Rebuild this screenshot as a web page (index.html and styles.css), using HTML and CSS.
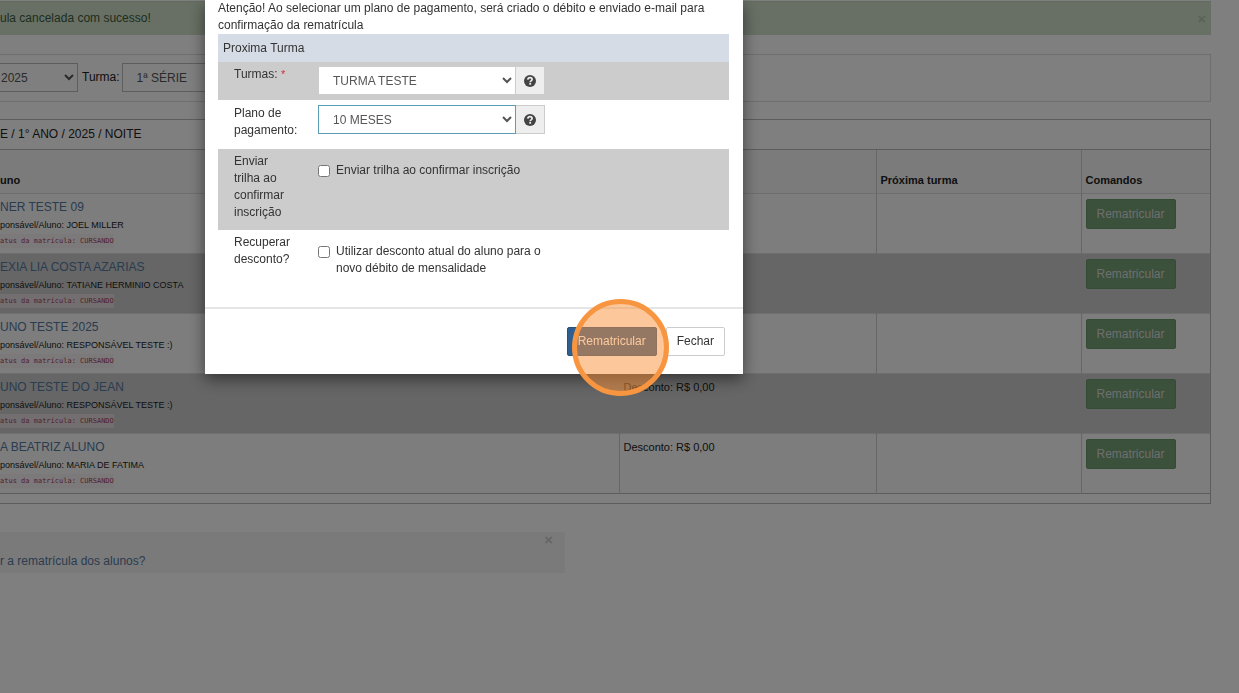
FILE: index.html
```html
<!DOCTYPE html>
<html lang="pt-BR">
<head>
    <meta charset="UTF-8">
    <meta name="viewport" content="width=device-width, initial-scale=1.0">
    <title>Rematrícula</title>
    <link rel="stylesheet" href="styles.css">
</head>
<body>
    <main class="page">
        <div class="alert">
            <span>ula cancelada com sucesso!</span>
            <button class="close" type="button">×</button>
        </div>

        <form class="filter">
            <select class="control year" aria-label="2025"><option>2025</option></select>
            <label for="turma">Turma:</label>
            <select class="control serie" id="turma"><option>1ª SÉRIE</option></select>
        </form>

        <section class="panel">
            <h2>E / 1° ANO / 2025 / NOITE</h2>
            <table class="students">
                <colgroup>
                    <col>
                    <col class="col-discount">
                    <col class="col-next">
                    <col class="col-commands">
                </colgroup>
                <thead>
                    <tr><th>uno</th><th></th><th>Próxima turma</th><th>Comandos</th></tr>
                </thead>
                <tbody>
                    <tr>
                        <td><a href="#">NER TESTE 09</a><small>ponsável/Aluno: JOEL MILLER</small><code>atus da matrícula: CURSANDO</code></td>
                        <td></td>
                        <td></td>
                        <td><button class="btn btn-success" type="button">Rematricular</button></td>
                    </tr>
                    <tr>
                        <td><a href="#">EXIA LIA COSTA AZARIAS</a><small>ponsável/Aluno: TATIANE HERMINIO COSTA</small><code>atus da matrícula: CURSANDO</code></td>
                        <td></td>
                        <td></td>
                        <td><button class="btn btn-success" type="button">Rematricular</button></td>
                    </tr>
                    <tr>
                        <td><a href="#">UNO TESTE 2025</a><small>ponsável/Aluno: RESPONSÁVEL TESTE :)</small><code>atus da matrícula: CURSANDO</code></td>
                        <td></td>
                        <td></td>
                        <td><button class="btn btn-success" type="button">Rematricular</button></td>
                    </tr>
                    <tr>
                        <td><a href="#">UNO TESTE DO JEAN</a><small>ponsável/Aluno: RESPONSÁVEL TESTE :)</small><code>atus da matrícula: CURSANDO</code></td>
                        <td>Desconto: R$ 0,00</td>
                        <td></td>
                        <td><button class="btn btn-success" type="button">Rematricular</button></td>
                    </tr>
                    <tr>
                        <td><a href="#">A BEATRIZ ALUNO</a><small>ponsável/Aluno: MARIA DE FATIMA</small><code>atus da matrícula: CURSANDO</code></td>
                        <td>Desconto: R$ 0,00</td>
                        <td></td>
                        <td><button class="btn btn-success" type="button">Rematricular</button></td>
                    </tr>
                </tbody>
            </table>
        </section>

        <aside class="help">
            <button class="close" type="button">×</button>
            <a href="#">r a rematrícula dos alunos?</a>
        </aside>
    </main>

    <div class="backdrop">
        <form class="modal" role="dialog" aria-modal="true">
            <div class="modal-body">
                <p class="notice">Atenção! Ao selecionar um plano de pagamento, será criado o débito e enviado e-mail para confirmação da rematrícula</p>
                <h3>Proxima Turma</h3>
                <div class="row gray">
                    <label class="name" for="turmas">Turmas: <span class="required">*</span></label>
                    <div class="group">
                        <select class="control" id="turmas"><option>TURMA TESTE</option></select>
                        <button class="addon" type="button" aria-label="Turmas">
                            <svg viewBox="0 0 12 12" width="12" height="12"><circle cx="6" cy="6" r="6" fill="#444"/><path d="M3.8 4.7C4 3.2 5 2.7 6 2.7s2.1.6 2.1 1.8c0 1.4-1.9 1.3-1.9 2.7" fill="none" stroke="#eee" stroke-width="1.7"/><rect x="5.3" y="8" width="1.8" height="1.7" fill="#eee"/></svg>
                        </button>
                    </div>
                </div>
                <div class="row plan">
                    <label class="name" for="plano">Plano de pagamento:</label>
                    <div class="group">
                        <select class="control active" id="plano"><option>10 MESES</option></select>
                        <button class="addon" type="button" aria-label="Plano de pagamento">
                            <svg viewBox="0 0 12 12" width="12" height="12"><circle cx="6" cy="6" r="6" fill="#444"/><path d="M3.8 4.7C4 3.2 5 2.7 6 2.7s2.1.6 2.1 1.8c0 1.4-1.9 1.3-1.9 2.7" fill="none" stroke="#eee" stroke-width="1.7"/><rect x="5.3" y="8" width="1.8" height="1.7" fill="#eee"/></svg>
                        </button>
                    </div>
                </div>
                <div class="row gray send">
                    <span class="name">Enviar<br>trilha ao confirmar inscrição</span>
                    <label class="check"><input type="checkbox"><span>Enviar trilha ao confirmar inscrição</span></label>
                </div>
                <div class="row discount">
                    <span class="name">Recuperar desconto?</span>
                    <label class="check"><input type="checkbox"><span>Utilizar desconto atual do aluno para o novo débito de mensalidade</span></label>
                </div>
            </div>
            <footer class="modal-footer">
                <button class="btn btn-primary" type="button">Rematricular<span class="marker"></span></button>
                <button class="btn btn-default" type="button">Fechar</button>
            </footer>
        </form>
    </div>
</body>
</html>
```
FILE: styles.css
```css
* { box-sizing: border-box; }
body { margin: 0; font: 12px/17px "Liberation Sans", Arial, sans-serif; color: #333; background: #fff; overflow: hidden; }
button, select, input { font: inherit; color: inherit; }
a { color: #55799f; text-decoration: none; }

/* page */
.page { padding: 1px 28px 0 0; color: #222; }
.alert { display: flex; justify-content: space-between; align-items: center; height: 34px; padding-right: 5px; background: #d0dfca; border-top: 1px solid #c5d8bd; color: #3c5c3c; }
.close { padding: 0; border: 0; background: none; font-size: 15px; font-weight: bold; line-height: 16px; opacity: 0.2; }
.filter { display: flex; align-items: center; gap: 4px; height: 48px; margin-top: 19px; padding-bottom: 1px; border: 1px solid #ddd; border-left: 0; }
.control { height: 29px; padding: 0 10px; border: 1px solid #ccc; border-radius: 0; background: #fff; color: #555; }
.filter .control { background: transparent; border-color: #bbb; }
.filter .year { width: 82px; margin-left: -4px; padding: 0; }
.filter .serie { width: 200px; margin-left: -2px; }

.panel { margin-top: 17px; padding-bottom: 9px; border: 1px solid #bbb; border-left: 0; }
.panel h2 { margin: 0; height: 29px; font-size: 12px; font-weight: normal; line-height: 29px; }
.students { width: 100%; table-layout: fixed; border-collapse: collapse; border-bottom: 1px solid #bbb; }
.col-discount { width: 257px; }
.col-next { width: 205px; }
.col-commands { width: 129px; }
.students th { height: 44px; padding: 0 4px 4px; text-align: left; vertical-align: bottom; font-size: 11px; background: #f6f6f6; border-top: 1px solid #bbb; }
.students th, .students td { border-left: 1px solid #ccc; }
.students td { height: 60px; padding: 5px 4px 4px; vertical-align: top; background: #fafafa; border-top: 1px solid #ddd; font-size: 11px; }
.students th:first-child, .students td:first-child { padding-left: 0; border-left: 0; }
.students th:nth-child(2) { border-left-color: #f6f6f6; }
.students tbody tr:nth-child(even) td { background: #ccc; }
.students td a, .students td small { display: block; white-space: nowrap; }
.students td a { font-size: 12px; line-height: 17px; }
.students td small { font-size: 9px; line-height: 18px; }
.students td code { display: table; padding: 0 5px 0 0; background: #f9f2f4; color: #a8405a; font: 7px/14px "DejaVu Sans Mono", monospace; }
.students tbody tr:nth-child(even) code { background: #e6dfe1; }
.btn { height: 29px; padding: 0 10px; border: 1px solid #ccc; border-radius: 2px; background: #fff; font-size: 12px; line-height: 17px; }
.btn-success { height: 30px; background: #76a276; border-color: #6a966a; color: #ddd; }

.help { display: flex; flex-direction: column; height: 41px; width: 565px; margin-top: 28px; background: #f5f5f5; }
.help .close { align-self: flex-end; margin-right: 12px; }
.help a { line-height: 27px; }

/* modal */
.backdrop { position: fixed; inset: 0; padding-left: 205px; background: rgba(0, 0, 0, 0.5); }
.modal { width: 538px; background: #fff; box-shadow: 0 5px 15px rgba(0, 0, 0, 0.5); }
.modal-body { padding: 0 14px 0 13px; border-bottom: 2px solid #e5e5e5; }
.notice { margin: 0; }
.modal h3 { margin: 0; padding: 0 5px; font-size: 12px; font-weight: normal; line-height: 28px; background: #d6dce6; }
.row { display: flex; align-items: flex-start; padding: 4px 16px 5px; }
.gray { background: #ccc; }
.name { flex: none; width: 64px; margin-right: 20px; }
.required { color: #c33; font-size: 11px; }
.group { display: flex; width: 227px; }
.group .control { flex: 1; min-width: 0; }
.group .active { border-color: #5b9db5; }
.addon { width: 29px; padding: 0; border: 1px solid #ccc; border-left: 0; background: #eee; display: flex; align-items: center; justify-content: center; }
.plan { padding: 5px 16px 10px; }
.send { padding-bottom: 9px; }
.check { display: flex; width: 227px; padding-top: 9px; }
.check input { width: 12px; height: 12px; margin: 3px 6px 0 0; flex: none; }
.discount { min-height: 77px; }
.modal-footer { display: flex; justify-content: flex-end; gap: 9px; padding: 18px; }
.btn-primary { position: relative; background: #2f5f91; border-color: #28517c; color: #fff; }
.marker { position: absolute; left: 4px; top: -29px; width: 97px; height: 97px; border: 5px solid #f79540; border-radius: 50%; background: rgba(250, 145, 55, 0.5); }
```
